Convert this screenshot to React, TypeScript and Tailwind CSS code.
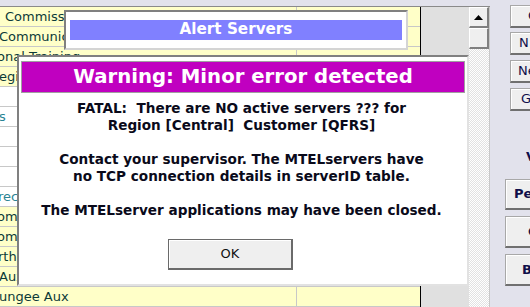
import React from "react";

type Row = { y: boolean; text: string; cls: string };

const rows: Row[] = [
  { y: true, text: "Commissioner", cls: "pl-[5px]" },
  { y: true, text: "Communications", cls: "-ml-[1px]" },
  { y: true, text: "onal Training", cls: "-ml-[3px]" },
  { y: true, text: "egional", cls: "-ml-[1px]" },
  { y: false, text: "", cls: "" },
  { y: false, text: "s", cls: "-ml-[1px]" },
  { y: false, text: "", cls: "" },
  { y: false, text: "", cls: "" },
  { y: false, text: "", cls: "" },
  { y: false, text: "rectorate", cls: "-ml-[2px]" },
  { y: true, text: "ommunity", cls: "-ml-[3px]" },
  { y: true, text: "ommand", cls: "-ml-[3px]" },
  { y: true, text: "rthern", cls: "-ml-[2px]" },
  { y: true, text: "Aux", cls: "-ml-[1px]" },
  { y: true, text: "ungee Aux", cls: "-ml-[1px]" },
];

const sans = "font-['DejaVu_Sans',sans-serif]";

function TopBtn({ label, cls }: { label: string; cls: string }) {
  return (
    <div
      className={`ml-[20px] w-[60px] h-[23px] bg-[#efefef] border border-[#a8a8a8] border-b-2 border-b-[#707070] shadow-[inset_1px_1px_0_#ffffff] text-[13px] leading-[20px] text-[#10104a] ${sans} ${cls}`}
    >
      {label}
    </div>
  );
}

function LowBtn({ label, cls, h }: { label: string; cls: string; h: string }) {
  return (
    <div
      className={`ml-[15px] w-[60px] ${h} bg-[#efefef] border border-[#a8a8a8] border-b-2 border-b-[#707070] shadow-[inset_1px_1px_0_#ffffff] text-[13px] font-bold flex items-center text-[#10104a] ${sans} ${cls}`}
    >
      {label}
    </div>
  );
}

export default function App() {
  return (
    <div className="relative w-[530px] h-[307px] overflow-hidden flex bg-[#e2e2ec]">
      {/* left: table + scrollbar */}
      <div className="w-[490px] flex flex-col">
        <div className="h-[7px] bg-[#e2e2ec]" />
        <div className="flex flex-1 border-t border-[#8a8a8a]">
          <div className="w-[469px] flex bg-[#e0e0e0]">
            <div className="w-[421px] flex flex-col border-r border-black">
              {rows.map((r, i) => (
                <div
                  key={i}
                  className={`h-[20px] shrink-0 flex border-b border-[#c8c8c8] ${r.y ? "bg-[#ffffc8]" : "bg-white"}`}
                >
                  <div className="w-[297px] border-r border-[#c8c8c8] overflow-hidden whitespace-nowrap">
                    <span
                      className={`block text-[13px] leading-[19px] ${sans} ${r.y ? "text-[#0c3a38]" : "text-[#2a8494]"} ${r.cls}`}
                    >
                      {r.text}
                    </span>
                  </div>
                  <div className="flex-1" />
                </div>
              ))}
            </div>
          </div>
          {/* scrollbar */}
          <div className="w-[21px] flex flex-col bg-[repeating-conic-gradient(#e2e2e2_0%_25%,#ffffff_0%_50%)] bg-[length:2px_2px] border-r border-[#c8c8c8]">
            <div className="h-[21px] bg-[#efefef] border-t border-l border-white border-r-2 border-b-2 border-r-[#808080] border-b-[#808080] flex items-center justify-center">
              <svg width="9" height="5" viewBox="0 0 9 5">
                <polygon points="4.5,0 9,5 0,5" fill="#000" />
              </svg>
            </div>
            <div className="h-[21px] bg-[#efefef] border-t border-l border-white border-r-2 border-b-2 border-r-[#808080] border-b-[#808080]" />
          </div>
        </div>
      </div>

      {/* right panel */}
      <div className="flex-1 flex flex-col bg-[#e2e2ec]">
        <div className="h-[5px]" />
        <TopBtn label="C" cls="pl-[17px]" />
        <div className="h-[4px]" />
        <TopBtn label="N" cls="pl-[8px]" />
        <div className="h-[5px]" />
        <TopBtn label="Ne" cls="pl-[7px]" />
        <div className="h-[5px]" />
        <TopBtn label="G" cls="pl-[10px]" />
        <div className="h-[68px] flex items-end pl-[36px] pb-[16px]">
          <span className={`text-[13px] font-bold text-[#10104a] leading-none ${sans}`}>V</span>
        </div>
        <LowBtn label="Pe" cls="pl-[8px]" h="h-[31px]" />
        <div className="h-[6px]" />
        <LowBtn label="C" cls="pl-[22px]" h="h-[32px]" />
        <div className="h-[6px]" />
        <LowBtn label="B" cls="pl-[16px]" h="h-[32px]" />
      </div>

      {/* Alert Servers dialog */}
      <div className="absolute left-[64px] top-[10px] w-[344px] h-[40px] bg-white border-l-2 border-t-2 border-[#808080] border-r-2 border-b-2 border-r-[#d4d4d4] border-b-[#d4d4d4]">
        <div className="mt-[8px] mx-[4px] h-[20px] bg-[#8080ff] flex items-center justify-center">
          <span className="text-[15.2px] font-bold text-white font-['DejaVu_Sans',sans-serif] leading-none">
            Alert Servers
          </span>
        </div>
      </div>

      {/* Warning dialog */}
      <div className="absolute left-[17px] top-[55px] w-[452px] h-[231px] bg-white border-l-2 border-t-2 border-[#808080] border-r-2 border-b-2 border-r-[#e2e2e2] border-b-[#e2e2e2] flex flex-col items-center">
        <div className="mt-[4px] w-[444px] h-[32px] bg-[#c000c0] border border-[#a0a0a0] flex items-center justify-center">
          <span className="text-[19.7px] font-bold text-white font-['DejaVu_Sans',sans-serif] leading-none">
            Warning: Minor error detected
          </span>
        </div>
        <div className="mt-[7px] text-center whitespace-pre text-[13.6px] font-bold leading-[17px] text-[#0a0a1a] font-['DejaVu_Sans',sans-serif] pr-[3px]">
          <div>{"FATAL:  There are NO active servers ??? for"}</div>
          <div>{"Region [Central]  Customer [QFRS]"}</div>
          <div>&nbsp;</div>
          <div>{"Contact your supervisor. The MTELservers have"}</div>
          <div>{"no TCP connection details in serverID table."}</div>
          <div>&nbsp;</div>
          <div>{"The MTELserver applications may have been closed."}</div>
        </div>
        <div className="self-start ml-[149px] mt-[20px] w-[125px] h-[31px] bg-[#efefef] border border-[#6a6a6a] border-r-2 border-b-2 shadow-[inset_1px_1px_0_#ffffff] flex items-center justify-center">
          <span className="text-[13px] text-[#111] font-['DejaVu_Sans',sans-serif]">OK</span>
        </div>
      </div>
    </div>
  );
}
